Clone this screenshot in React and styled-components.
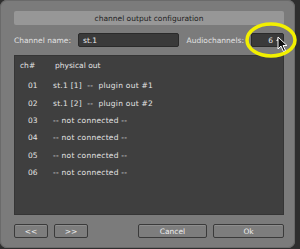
import React from 'react'
import styled, { createGlobalStyle } from 'styled-components';

const GlobalStyle = createGlobalStyle`
  html, body {
    margin: 0;
    padding: 0;
    background: #2e2e2e;
    width: 300px;
    height: 249px;
    overflow: hidden;
  }
`;

const rows = [
  { ch: "01", out: "st.1 [1]  --  plugin out #1" },
  { ch: "02", out: "st.1 [2]  --  plugin out #2" },
  { ch: "03", out: "-- not connected --" },
  { ch: "04", out: "-- not connected --" },
  { ch: "05", out: "-- not connected --" },
  { ch: "06", out: "-- not connected --" },
];

const App = () => {
  return (
    <>
      <GlobalStyle />
      <Window>
        <TitleBar>channel output configuration</TitleBar>

        <FieldRow>
          <Label>Channel name:</Label>
          <TextBox width="101px">st.1</TextBox>
          <Spacer />
          <Label>Audiochannels:</Label>
          <TextBox width="33px" align="right">
            6
            <SpinArrow />
          </TextBox>
        </FieldRow>

        <Panel>
          <HeaderRow>
            <HeadCh>ch#</HeadCh>
            <span>physical out</span>
          </HeaderRow>
          {rows.map(r => (
            <ListRow key={r.ch}>
              <ChCell>{r.ch}</ChCell>
              <OutCell>{r.out}</OutCell>
            </ListRow>
          ))}
        </Panel>

        <ButtonRow>
          <Button width="34px">&lt;&lt;</Button>
          <Button width="34px">&gt;&gt;</Button>
          <Spacer />
          <Button width="69px">Cancel</Button>
          <Button width="71px">Ok</Button>
        </ButtonRow>

        <Highlight viewBox="0 0 54 38">
          <ellipse cx="27" cy="19" rx="24" ry="16" fill="none" stroke="#f2f000" strokeWidth="3.5" />
        </Highlight>
        <Cursor viewBox="0 0 12 17">
          <path d="M1 1 L1 13 L4 10 L6.5 15.5 L8.5 14.5 L6 9.5 L10 9.5 Z" fill="#111" stroke="#fff" strokeWidth="1" strokeLinejoin="round" />
        </Cursor>
      </Window>
    </>
  )
}

export default App;


/* ===========================
   Styled Components
=========================== */

const Window = styled.div`
  position: relative;
  box-sizing: border-box;
  width: 295px;
  height: 248px;
  background: #7b7b7b;
  border-radius: 7px;
  padding: 11px 11px 0 14px;
  display: flex;
  flex-direction: column;
  font-family: "DejaVu Sans", Verdana, sans-serif;
  font-size: 7.5px;
  font-variant-ligatures: none;
  box-shadow: inset 0 0 0 1px #6a6a6a;
`;

const TitleBar = styled.div`
  height: 14px;
  width: 270px;
  background: #979797;
  border-radius: 2px;
  color: #1e1e1e;
  display: flex;
  align-items: center;
  justify-content: center;
`;

const FieldRow = styled.div`
  display: flex;
  align-items: center;
  width: 270px;
  margin-top: 8px;
  height: 14px;
`;

const Label = styled.span`
  color: #e2e2e2;
  margin-right: 7px;
  white-space: nowrap;
`;

const TextBox = styled.div`
  position: relative;
  box-sizing: border-box;
  width: ${p => p.width};
  height: 14px;
  background: #3a3a3a;
  border: 1px solid #2a2a2a;
  border-radius: 2px;
  color: #eaeaea;
  display: flex;
  align-items: center;
  justify-content: ${p => (p.align === 'right' ? 'flex-end' : 'flex-start')};
  padding: ${p => (p.align === 'right' ? '0 10px 0 0' : '0 0 0 4px')};
`;

const SpinArrow = styled.span`
  position: absolute;
  right: 3px;
  top: 4px;
  width: 0;
  height: 0;
  border-left: 2px solid transparent;
  border-right: 2px solid transparent;
  border-bottom: 3px solid #cfcfcf;
`;

const Spacer = styled.div`
  flex: 1;
`;

const Panel = styled.div`
  box-sizing: border-box;
  width: 270px;
  height: 160px;
  margin-top: 8px;
  background: #3f3f3f;
  border: 1px solid #353535;
  color: #e4e4e4;
  padding: 4px 0 0 5px;
`;

const HeaderRow = styled.div`
  display: flex;
  height: 10px;
  align-items: center;
  margin-bottom: 7px;
`;

const HeadCh = styled.span`
  width: 35px;
`;

const ListRow = styled.div`
  display: flex;
  height: 17.4px;
  align-items: center;
`;

const ChCell = styled.span`
  width: 33px;
  padding-left: 8px;
  box-sizing: border-box;
`;

const OutCell = styled.span`
  white-space: pre;
  letter-spacing: 0.25px;
`;

const ButtonRow = styled.div`
  display: flex;
  gap: 6px;
  width: 270px;
  margin-top: 9px;
`;

const Button = styled.div`
  box-sizing: border-box;
  width: ${p => p.width};
  height: 14px;
  background: #7d7d7d;
  border: 1px solid #3a3a3a;
  border-radius: 2px;
  box-shadow: inset 0 1px 0 #8e8e8e;
  color: #eeeeee;
  display: flex;
  align-items: center;
  justify-content: center;
`;

const Highlight = styled.svg`
  position: absolute;
  left: 244px;
  top: 21px;
  width: 54px;
  height: 38px;
`;

const Cursor = styled.svg`
  position: absolute;
  left: 277px;
  top: 36px;
  width: 12px;
  height: 17px;
`;
